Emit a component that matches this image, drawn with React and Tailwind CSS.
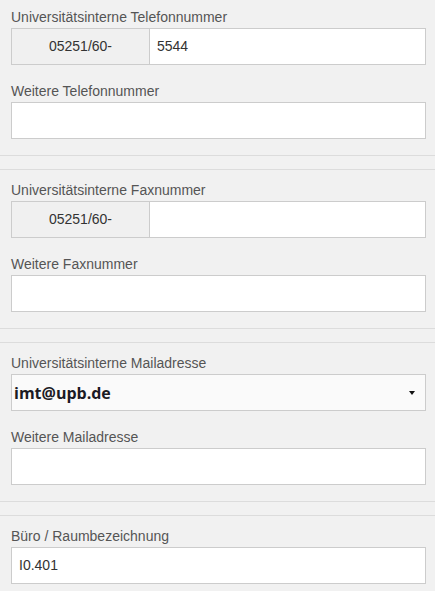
import React from 'react';

const Label = ({ children }) => (
    <label className="block h-[21px] text-[14px] leading-[21px] text-[#555]">{children}</label>
);

const TextInput = ({ value = '' }) => (
    <div className="flex h-[37px] items-center border border-[#ccc] bg-white px-[7px] text-[14px] text-[#333]">
        {value}
    </div>
);

const PrefixInput = ({ prefix, value = '' }) => (
    <div className="flex h-[37px] border border-[#ccc] text-[14px] text-[#333]">
        <div className="flex w-[138px] items-center justify-center border-r border-[#ccc] bg-[#f0f0f0]">
            {prefix}
        </div>
        <div className="flex flex-1 items-center bg-white px-[7px]">{value}</div>
    </div>
);

const SelectBox = ({ value }) => (
    <div className="flex h-[37px] items-center justify-between border border-[#ccc] bg-[#fafafa] pl-[2px] pr-[10px]">
        <span className="font-['Open_Sans',sans-serif] text-[16px] font-bold text-[#1b1b24]">{value}</span>
        <span className="h-0 w-0 border-x-[3px] border-t-[4px] border-x-transparent border-t-[#111]" />
    </div>
);

const Field = ({ label, children }) => (
    <div className="mb-4">
        <Label>{label}</Label>
        {children}
    </div>
);

const Section = ({ children, first }) => (
    <div className={first ? 'border-b border-[#dcdcdc] pt-[7px]' : 'mt-[13px] border-y border-[#dcdcdc] pt-[10px]'}>
        <div className="pl-[11px] pr-[9px]">{children}</div>
    </div>
);

const App = () => {
    return (
        <div className="min-h-[591px] w-[435px] overflow-hidden bg-[#f1f1f1] font-['Liberation_Sans',Arial,sans-serif]">
            <Section first>
                <Field label="Universitätsinterne Telefonnummer">
                    <PrefixInput prefix="05251/60-" value="5544" />
                </Field>
                <Field label="Weitere Telefonnummer">
                    <TextInput />
                </Field>
            </Section>

            <Section>
                <Field label="Universitätsinterne Faxnummer">
                    <PrefixInput prefix="05251/60-" />
                </Field>
                <Field label="Weitere Faxnummer">
                    <TextInput />
                </Field>
            </Section>

            <Section>
                <Field label="Universitätsinterne Mailadresse">
                    <SelectBox value="imt@upb.de" />
                </Field>
                <Field label="Weitere Mailadresse">
                    <TextInput />
                </Field>
            </Section>

            <Section>
                <Field label="Büro / Raumbezeichnung">
                    <TextInput value="I0.401" />
                </Field>
            </Section>
        </div>
    );
};

export default App;
